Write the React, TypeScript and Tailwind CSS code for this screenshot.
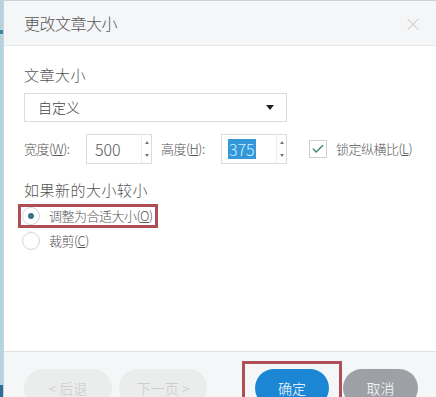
import { Check } from "lucide-react";

const font = { fontFamily: '"Noto Sans CJK SC", "Liberation Sans", sans-serif' };

const Spinner = ({ value, selected }: { value: string; selected?: boolean }) => (
  <div className="flex h-[30px] w-[66px] border border-[#dcdcdc] bg-white">
    <div className="flex flex-1 items-center pl-[6px]">
      {selected ? (
        <span className="bg-[#3497d9] px-[1px] text-[16px] leading-[20px] text-[#cfeeff]">{value}</span>
      ) : (
        <span className="pl-[2px] text-[16px] leading-[20px] text-[#555]">{value}</span>
      )}
    </div>
    <div className="flex w-[10px] flex-col items-center justify-between border-l border-[#eeeeee] py-[6px]">
      <span className="h-0 w-0 border-x-[2.5px] border-b-[3px] border-x-transparent border-b-[#777]" />
      <span className="h-0 w-0 border-x-[2.5px] border-t-[3px] border-x-transparent border-t-[#777]" />
    </div>
  </div>
);

const Radio = ({ checked }: { checked?: boolean }) => (
  <span className="flex h-[18px] w-[18px] items-center justify-center rounded-full border border-[#d6d6d6] bg-white">
    {checked && <span className="h-[6px] w-[6px] rounded-full bg-[#3b6f86]" />}
  </span>
);

export default function App() {
  return (
    <div className="flex h-[397px] w-[436px] overflow-hidden bg-white font-light" style={font}>
      <div className="flex w-[3px] flex-col bg-[#b2d4df]">
        <div className="mt-[30px] h-[4px] bg-[#3d84a8]" />
        <div className="flex-1" />
        <div className="h-[12px] bg-[#2f6f95]" />
      </div>
      <div className="flex flex-1 flex-col border-l border-t border-[#cfd2d4]">
        <div className="flex h-[45px] items-center justify-between border-b border-[#e4e6e8] bg-[#f5f6f7] pl-[20px] pr-[14px]">
          <span className="text-[16px] text-[#555] tracking-[-0.5px]">更改文章大小</span>
          <span className="text-[18px] font-light leading-none text-[#cfcfcf]">×</span>
        </div>

        <div className="flex flex-1 flex-col px-[20px] pt-[19px]">
          <div className="text-[15px] leading-[20px] tracking-[0.5px] text-[#555]">文章大小</div>
          <div className="mt-[8px] flex h-[29px] w-[263px] items-center justify-between border border-[#dcdcdc] pl-[13px] pr-[12px]">
            <span className="text-[14px] text-[#444]">自定义</span>
            <span className="h-0 w-0 border-x-[4px] border-t-[5px] border-x-transparent border-t-[#222]" />
          </div>

          <div className="mt-[12px] flex items-center">
            <span className="w-[62px] text-[13px] tracking-[-0.5px] text-[#555]">
              宽度(<span className="underline">W</span>):
            </span>
            <Spinner value="500" />
            <span className="ml-[9px] w-[60px] text-[13px] tracking-[-0.5px] text-[#555]">
              高度(<span className="underline">H</span>):
            </span>
            <Spinner value="375" selected />
            <span className="ml-[22px] flex h-[18px] w-[18px] items-center justify-center border border-[#cfcfcf] bg-white">
              <Check size={14} strokeWidth={2.5} className="text-[#3d8a78]" />
            </span>
            <span className="ml-[9px] text-[13px] tracking-[-0.5px] text-[#555]">
              锁定纵横比(<span className="underline">L</span>)
            </span>
          </div>

          <div className="mt-[16px] text-[15px] leading-[20px] tracking-[0.5px] text-[#555]">如果新的大小较小</div>
          <div className="-ml-[6px] mt-[4px] flex h-[24px] w-[140px] items-center gap-[9px] border-[3px] border-[#b04e57] pl-[1px]">
            <Radio checked />
            <span className="text-[13px] tracking-[-0.5px] text-[#555]">
              调整为合适大小(<span className="underline">O</span>)
            </span>
          </div>
          <div className="mt-[2px] flex h-[22px] items-center gap-[9px] -ml-[2px]">
            <Radio />
            <span className="text-[13px] tracking-[-0.5px] text-[#555]">
              裁剪(<span className="underline">C</span>)
            </span>
          </div>
        </div>

        <div className="flex h-[46px] items-start border-t border-[#dfe1e3] bg-[#f5f6f7] pl-[20px] pt-[9px]">
          <div className="mt-[8px] flex h-[38px] w-[88px] items-start justify-center rounded-full bg-[#ebecec] pt-[9px] text-[14px] text-[#c9c9c9]">
            &lt; 后退
          </div>
          <div className="ml-[7px] mt-[8px] flex h-[38px] w-[88px] items-start justify-center rounded-full bg-[#ebecec] pt-[9px] text-[14px] text-[#c9c9c9]">
            下一页 &gt;
          </div>
          <div className="ml-[35px] flex h-[40px] w-[100px] items-start justify-center border-[3px] border-[#b04e57] pt-[5px]">
            <div className="flex h-[38px] w-[74px] items-start justify-center rounded-full bg-[#1b87d4] pt-[9px] text-[14px] text-white">
              确定
            </div>
          </div>
          <div className="ml-[1px] mt-[8px] flex h-[38px] w-[75px] items-start justify-center rounded-full bg-[#9da1a6] pt-[9px] text-[14px] text-white">
            取消
          </div>
        </div>
      </div>
    </div>
  );
}
